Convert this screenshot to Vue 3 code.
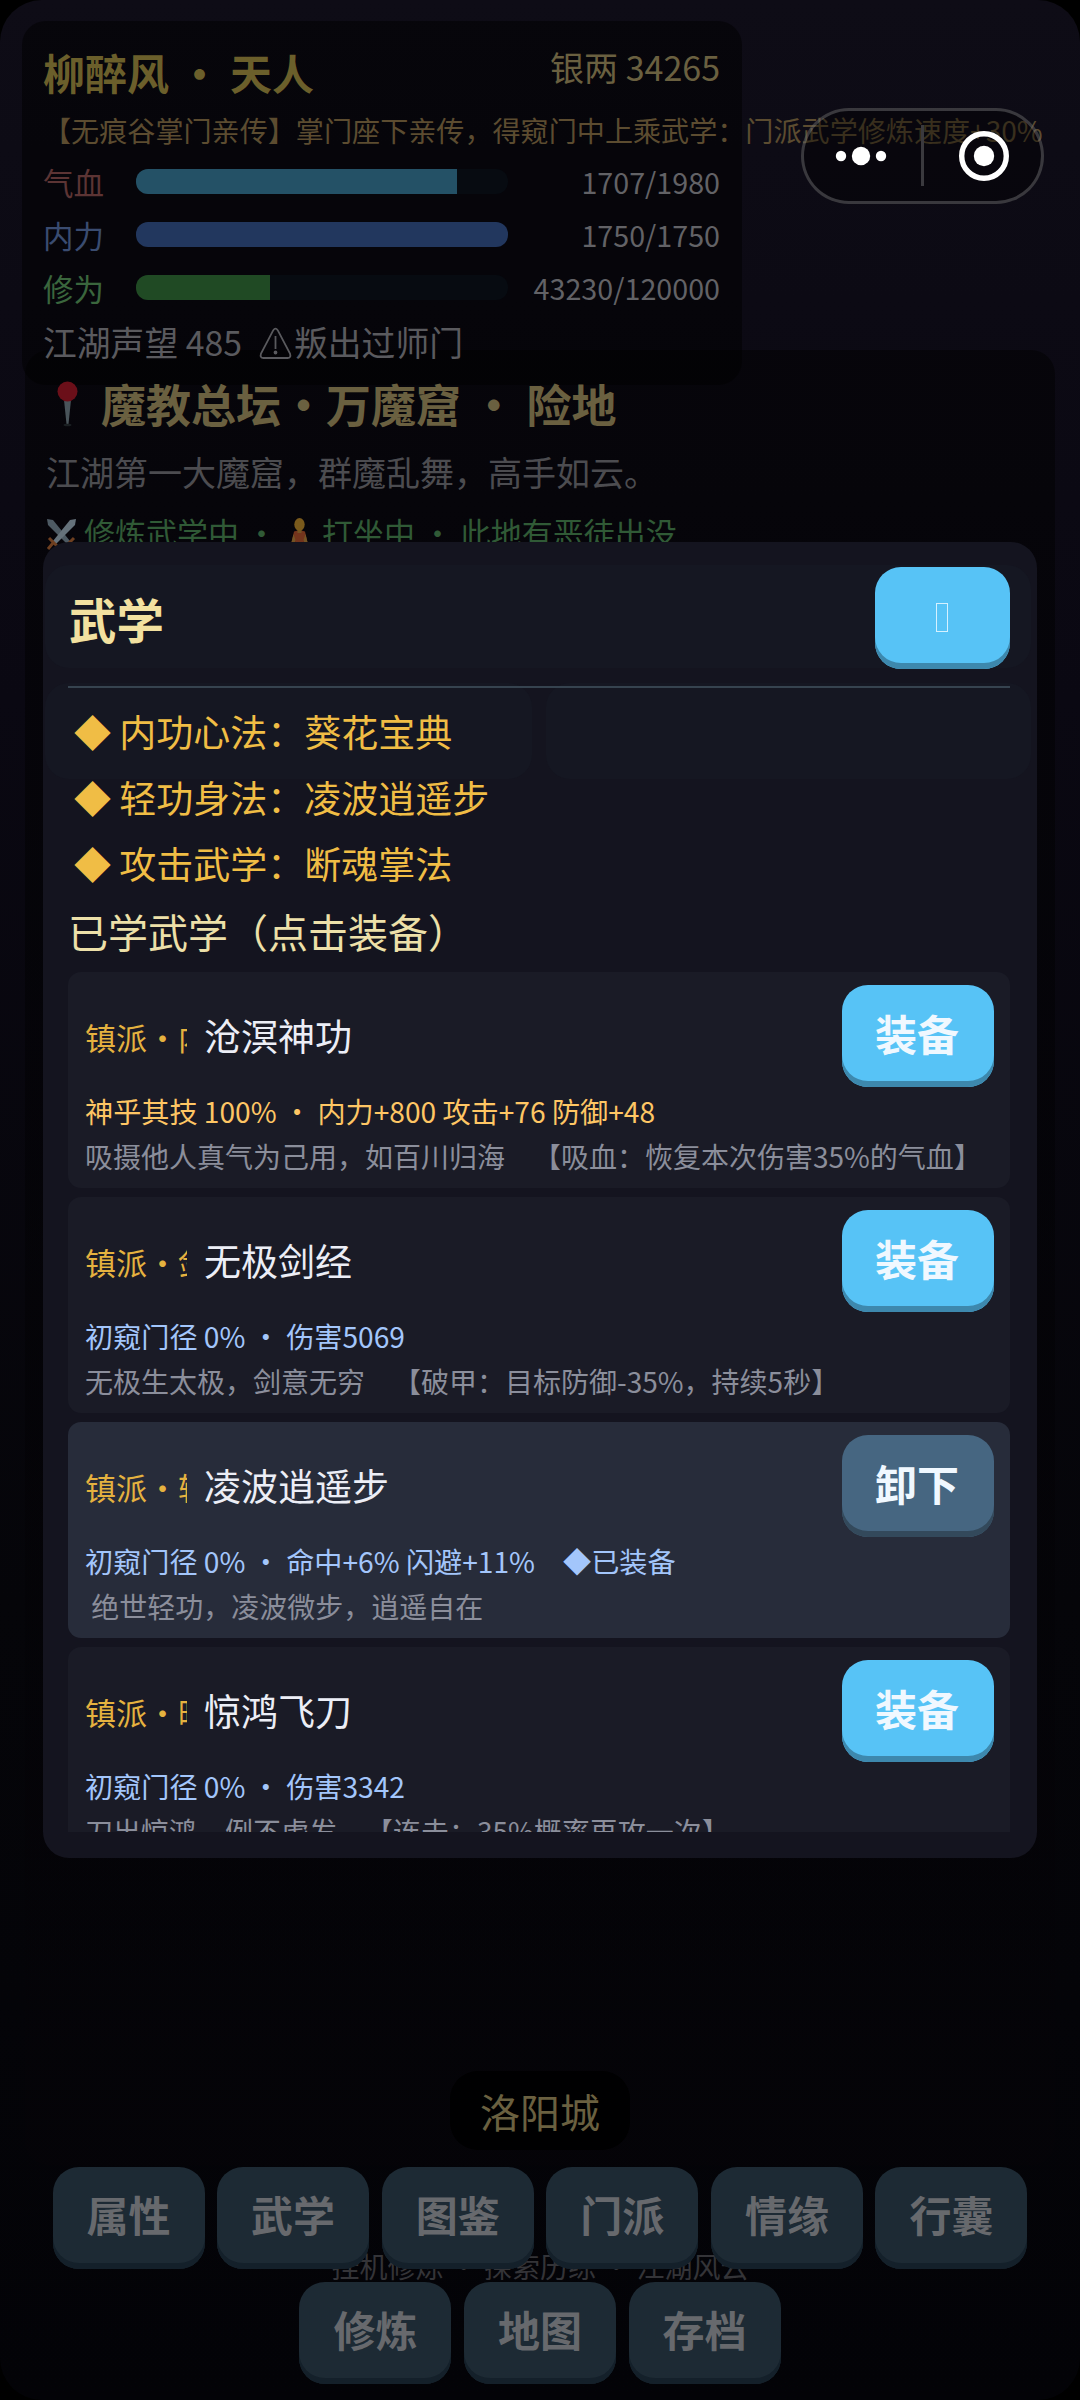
<script setup>
const bars = [
  { label: '气血', kind: 'hp', now: 1707, max: 1980 },
  { label: '内力', kind: 'mp', now: 1750, max: 1750 },
  { label: '修为', kind: 'xp', now: 43230, max: 120000 },
]
const slots = ['◆ 内功心法：葵花宝典', '◆ 轻功身法：凌波逍遥步', '◆ 攻击武学：断魂掌法']
const skills = [
  { tag: '镇派・内功', name: '沧溟神功', gold: true, stat: '神乎其技 100% ・ 内力+800 攻击+76 防御+48', desc: '吸摄他人真气为己用，如百川归海　【吸血：恢复本次伤害35%的气血】' },
  { tag: '镇派・剑法', name: '无极剑经', stat: '初窥门径 0% ・ 伤害5069', desc: '无极生太极，剑意无穷　【破甲：目标防御-35%，持续5秒】' },
  { tag: '镇派・轻功', name: '凌波逍遥步', on: true, stat: '初窥门径 0% ・ 命中+6% 闪避+11%　◆已装备', desc: '\u00a0绝世轻功，凌波微步，逍遥自在' },
  { tag: '镇派・暗器', name: '惊鸿飞刀', stat: '初窥门径 0% ・ 伤害3342', desc: '刀出惊鸿，例不虚发　【连击：35%概率再攻一次】' },
]
const nav = [['属性', '武学', '图鉴', '门派', '情缘', '行囊'], ['修炼', '地图', '存档']]
</script>

<template>
  <div class="screen">
    <section class="hero">
      <div class="hero-top">
        <h1>柳醉风 ・ 天人</h1>
        <span class="silver">银两 34265</span>
      </div>
      <p class="trait">【无痕谷掌门亲传】掌门座下亲传，得窥门中上乘武学：门派武学修炼速度+30%</p>
      <div v-for="b in bars" :key="b.label" class="bar-row" :class="b.kind">
        <span class="bar-label">{{ b.label }}</span>
        <div class="track"><div class="fill" :style="{ width: (b.now / b.max) * 100 + '%' }"></div></div>
        <span class="bar-val">{{ b.now }}/{{ b.max }}</span>
      </div>
      <p class="fame">
        <span>江湖声望 485</span>
        <svg width="33" height="33" viewBox="0 0 33 33" fill="none" stroke="#5a5a5e" stroke-width="1.8">
          <path d="M14.3 3.2Q16.5 .2 18.7 3.2L31 26.5Q32.4 31 28.5 31H4.5Q.6 31 2 26.5Z" />
          <path d="M16.5 9V22" /><circle cx="16.5" cy="25.5" r="1" />
        </svg>
        <span>叛出过师门</span>
      </p>
    </section>

    <section class="place">
      <h2>
        <svg width="45" height="46" viewBox="0 0 45 46">
          <path d="M19 19h7l-2.6 25h-1.8Z" fill="#49545a" /><circle cx="22.5" cy="10.5" r="10" fill="#6b0f19" />
          <ellipse cx="22.5" cy="44" rx="4" ry="1.3" fill="#1a1f22" />
        </svg>
        <span>魔教总坛・万魔窟 ・ 险地</span>
      </h2>
      <p class="place-desc">江湖第一大魔窟，群魔乱舞，高手如云。</p>
      <p class="place-state">
        <svg class="swords" width="31" height="32" viewBox="0 0 31 32">
          <path d="M1 1l6 1 17 21-3 3L2 7Z" fill="#4d5a63" /><path d="M30 1l-6 1L7 23l3 3L29 7Z" fill="#65727b" />
          <path d="M3 20l9 9M7 25l-5 6M28 20l-9 9M24 25l5 6" stroke="#6e3f20" stroke-width="3" fill="none" />
        </svg>
        <span>修炼武学中 ・</span>
        <svg class="monk" width="31" height="32" viewBox="0 0 31 32">
          <path d="M10 13.500q5.500-2 11 0l2 9 2 8-3 1-3-8v9H12v-9l-3 8-3-1 2-8Z" fill="#73341c" />
          <path d="M9.500 16 6 30l2.500 1 3-9ZM21.500 16 25 30l-2.500 1-3-9ZM13.500 11h4v4h-4Z" fill="#735324" />
          <ellipse cx="15.500" cy="6.500" rx="5.200" ry="6.500" fill="#7a5a1c" />
        </svg>
        <span>打坐中 ・ 此地有恶徒出没</span>
      </p>
    </section>

    <p class="hint">挂机修炼 ・ 探索历练 ・ 江湖风云</p>
    <nav>
      <div v-for="(row, i) in nav" :key="i" class="nav-row">
        <button v-for="n in row" :key="n" class="btn dim">{{ n }}</button>
      </div>
    </nav>
    <div class="city">洛阳城</div>

    <div class="modal">
      <i class="ghost g1"></i><i class="ghost g2"></i><i class="ghost g3"></i>
      <header>
        <h3>武学</h3>
        <button class="btn close"><i></i></button>
      </header>
      <div class="list">
        <p v-for="s in slots" :key="s" class="slot">{{ s }}</p>
        <p class="sub">已学武学（点击装备）</p>
        <article v-for="k in skills" :key="k.name" class="card" :class="{ on: k.on }">
          <div class="card-top">
            <span class="tag">{{ k.tag }}</span>
            <span class="name">{{ k.name }}</span>
            <button class="btn" :class="{ off: k.on }">{{ k.on ? '卸下' : '装备' }}</button>
          </div>
          <p class="stat" :class="{ gold: k.gold }">{{ k.stat }}</p>
          <p class="desc">{{ k.desc }}</p>
        </article>
      </div>
    </div>

    <div class="capsule">
      <svg width="237" height="90" viewBox="0 0 237 90" fill="#fff">
        <circle cx="37" cy="45" r="5.200" /><circle cx="57" cy="45" r="9.200" /><circle cx="77" cy="45" r="5.200" />
        <rect x="117" y="14" width="3" height="61" fill="#3a393e" />
        <circle cx="180" cy="45" r="22.300" fill="none" stroke="#fff" stroke-width="5.400" /><circle cx="180" cy="45" r="10.200" />
      </svg>
    </div>
  </div>
</template>

<style>
body { margin: 0; background: #000; }
</style>

<style scoped>
* { box-sizing: border-box; }
h1, h2, h3, p { margin: 0; font-weight: 400; white-space: nowrap; }
.screen {
  position: relative;
  width: 1080px;
  height: 2400px;
  overflow: hidden;
  border-radius: 42px;
  padding-top: 21px;
  background: linear-gradient(#0e0c16 0, #0c0a14 300px, #0a0812 700px, #050509 1600px, #030307 2400px);
  font-family: "Noto Sans CJK SC", sans-serif;
  text-spacing-trim: space-all;
}
.hero {
  width: 720px;
  height: 364px;
  margin-left: 22px;
  padding: 21px 22px 0 21px;
  border-radius: 24px;
  background: rgba(0, 0, 0, .5);
}
.hero-top { display: flex; justify-content: space-between; height: 62px; }
h1 { font-size: 42px; line-height: 60px; font-weight: 700; color: #6b5f2b; }
.silver { font-size: 34px; line-height: 50px; color: #6a6040; }
.trait { font-size: 28.100px; line-height: 42px; margin-top: 5px; color: #5c4c30; }
.bar-row { display: flex; align-items: center; height: 53px; }
.trait + .bar-row { margin-top: 4px; }
.bar-label { width: 93px; font-size: 30.500px; line-height: 52px; }
.track { width: 372px; height: 25px; border-radius: 12px; overflow: hidden; background: #070b11; }
.fill { height: 100%; }
.bar-val { flex: 1; text-align: right; font-size: 28.700px; line-height: 51px; color: #626266; }
.hp .bar-label { color: #5c3434; }
.mp .bar-label { color: #3a4c70; }
.xp .bar-label { color: #3a663d; }
.hp .fill { background: #245166; }
.mp .fill { background: #22375e; }
.xp .fill { background: #204a24; }
.fame { display: flex; align-items: center; font-size: 33.800px; line-height: 52px; color: #5a5a5e; margin-top: 2px; }
.fame svg { margin: 0 2px 0 17px; position: relative; top: 1px; }
.place {
  width: 1030px;
  height: 1815px;
  margin: -35px auto 0;
  padding: 23px 20px 0;
  border-radius: 24px;
  background: linear-gradient(rgba(0, 0, 0, .48) 20%, rgba(4, 3, 7, .5) 80%, rgba(5, 4, 8, .6));
}
h2 { display: flex; align-items: center; gap: 11px; font-size: 45px; line-height: 62px; font-weight: 700; color: #6a6040; }
.place-desc { font-size: 34px; line-height: 50px; margin: 12px 0 0 1px; color: #4c4c50; }
.place-state { display: flex; align-items: center; font-size: 31px; line-height: 46px; margin-top: 12px; padding-left: 1px; color: #305a36; }
.place-state svg { margin-right: 7px; position: relative; top: 2px; }
.place-state .monk { margin-left: 7px; }
nav { display: flex; flex-direction: column; gap: 13px; margin-top: 2px; }
.nav-row { display: flex; justify-content: center; gap: 12.600px; }
.btn {
  width: 152px;
  height: 102px;
  padding: 0 2px 6px 0;
  border: 0;
  border-radius: 26px;
  box-shadow: inset 0 -6px 0 #3d88ad;
  background: #57c3f6;
  color: #f0f8ff;
  font: 700 42px/94px "Noto Sans CJK SC", sans-serif;
}
.btn.off { background: #466681; box-shadow: inset 0 -6px 0 #33495b; }
.btn.dim { position: relative; padding: 0 0 8px; background: #1d2a34; box-shadow: inset 0 -6px 0 #14202a; color: #67696d; }
.hint {
  position: absolute;
  top: 2245px;
  left: 0;
  width: 100%;
  text-align: center;
  font-size: 28px;
  line-height: 42px;
  color: #343438;
}
.city {
  position: absolute;
  top: 2071px;
  left: 450px;
  width: 180px;
  height: 79px;
  border-radius: 28px;
  background: #000001;
  text-align: center;
  font-size: 40px;
  line-height: 80px;
  color: #6a6040;
}
.modal {
  position: absolute;
  top: 542px;
  left: 43px;
  width: 994px;
  height: 1316px;
  padding: 25px 27px 26px 25px;
  border-radius: 26px;
  background: #14141f;
  display: flex;
  flex-direction: column;
}
header {
  position: relative;
  display: flex;
  justify-content: space-between;
  height: 121px;
  border-bottom: 2px solid #36434f;
  flex: none;
}
h3 { font-size: 47.500px; line-height: 103px; padding-left: 1px; font-weight: 700; color: #f2e1a0; }
.close { width: 135px; display: flex; align-items: center; justify-content: center; }
.close i { width: 12px; height: 29px; margin-top: 4px; border: 1px solid #d5f1ff; }
.ghost { position: absolute; border-radius: 24px; background: #151722; }
.g1 { left: 2px; top: 23px; width: 986px; height: 103px; }
.g2 { left: 2px; top: 141px; width: 487px; height: 96px; }
.g3 { left: 503px; top: 141px; width: 485px; height: 96px; }
.list { position: relative; flex: 1; overflow: hidden; padding-top: 10px; }
.slot { font-size: 37px; line-height: 66px; padding-left: 6px; color: #f0bd45; }
.sub { font-size: 40px; line-height: 70px; height: 76px; color: #ede0a9; }
.card {
  height: 216px;
  margin-bottom: 9px;
  padding: 13px 16px 0 17px;
  border-radius: 13px;
  background: #1a1b26;
}
.card.on { background: #272c3a; }
.card-top { display: flex; height: 102px; }
.tag { width: 102px; overflow: hidden; white-space: nowrap; font-size: 31px; line-height: 103px; color: #e5b23f; }
.name { flex: 1; margin-left: 17px; font-size: 37px; line-height: 100px; color: #eceef6; }
.stat { font-size: 28.150px; line-height: 44px; margin-top: 2px; color: #a3c6fb; }
.stat.gold { color: #fec664; }
.desc { font-size: 28px; line-height: 44px; margin-top: 1px; color: #8b8e9b; }
.capsule {
  position: absolute;
  top: 108px;
  left: 801px;
  width: 243px;
  height: 96px;
  border: 3px solid rgba(255, 255, 255, .2);
  border-radius: 48px;
  background: rgba(0, 0, 0, .38);
}
.capsule svg { display: block; }
</style>
